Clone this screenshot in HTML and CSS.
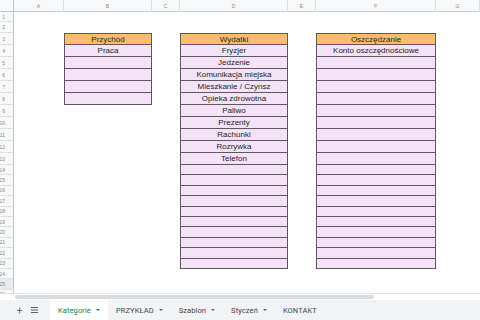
FILE: index.html
```html
<!DOCTYPE html>
<html lang="pl">
<head>
    <meta charset="UTF-8">
    <meta name="viewport" content="width=device-width, initial-scale=1.0">
    <title>Kategorie</title>
    <link rel="stylesheet" href="styles.css">
</head>
<body>

<div class="sheet">
    <!-- naglowki kolumn -->
    <div class="col-head corner"></div>
    <div class="col-head">A</div>
    <div class="col-head">B</div>
    <div class="col-head">C</div>
    <div class="col-head">D</div>
    <div class="col-head">E</div>
    <div class="col-head">F</div>
    <div class="col-head">G</div>

    <!-- numery wierszy -->
    <div class="row-head">1</div>
    <div class="row-head">2</div>
    <div class="row-head">3</div>
    <div class="row-head">4</div>
    <div class="row-head">5</div>
    <div class="row-head">6</div>
    <div class="row-head">7</div>
    <div class="row-head">8</div>
    <div class="row-head">9</div>
    <div class="row-head">10</div>
    <div class="row-head">11</div>
    <div class="row-head">12</div>
    <div class="row-head">13</div>
    <div class="row-head">14</div>
    <div class="row-head">15</div>
    <div class="row-head">16</div>
    <div class="row-head">17</div>
    <div class="row-head">18</div>
    <div class="row-head">19</div>
    <div class="row-head">20</div>
    <div class="row-head">21</div>
    <div class="row-head">22</div>
    <div class="row-head">23</div>
    <div class="row-head">24</div>
    <div class="row-head active">25</div>
    <div class="row-head">26</div>

    <!-- Przychod -->
    <div class="cat cat-income">
        <div class="cell head">Przychód</div>
        <div class="cell">Praca</div>
        <div class="cell"></div>
        <div class="cell"></div>
        <div class="cell"></div>
        <div class="cell"></div>
    </div>

    <!-- Wydatki -->
    <div class="cat cat-expense">
        <div class="cell head">Wydatki</div>
        <div class="cell">Fryzjer</div>
        <div class="cell">Jedzenie</div>
        <div class="cell">Komunikacja miejska</div>
        <div class="cell">Mieszkanie / Czynsz</div>
        <div class="cell">Opieka zdrowotna</div>
        <div class="cell">Paliwo</div>
        <div class="cell">Prezenty</div>
        <div class="cell">Rachunki</div>
        <div class="cell">Rozrywka</div>
        <div class="cell">Telefon</div>
        <div class="cell sm"></div>
        <div class="cell sm"></div>
        <div class="cell sm"></div>
        <div class="cell sm"></div>
        <div class="cell sm"></div>
        <div class="cell sm"></div>
        <div class="cell sm"></div>
        <div class="cell sm"></div>
        <div class="cell sm"></div>
        <div class="cell sm"></div>
    </div>

    <!-- Oszczedzanie -->
    <div class="cat cat-savings">
        <div class="cell head">Oszczędzanie</div>
        <div class="cell">Konto oszczędnościowe</div>
        <div class="cell"></div>
        <div class="cell"></div>
        <div class="cell"></div>
        <div class="cell"></div>
        <div class="cell"></div>
        <div class="cell"></div>
        <div class="cell"></div>
        <div class="cell"></div>
        <div class="cell"></div>
        <div class="cell sm"></div>
        <div class="cell sm"></div>
        <div class="cell sm"></div>
        <div class="cell sm"></div>
        <div class="cell sm"></div>
        <div class="cell sm"></div>
        <div class="cell sm"></div>
        <div class="cell sm"></div>
        <div class="cell sm"></div>
        <div class="cell sm"></div>
    </div>
</div>

<div class="hscroll">
    <div class="hscroll-thumb"></div>
</div>

<div class="tabs">
    <span class="tab-btn">+</span>
    <span class="tab-btn list">
        <svg width="7" height="6" viewBox="0 0 7 6"><path d="M0 0.5h7M0 3h7M0 5.5h7" stroke="#5f6368" stroke-width="1.2"/></svg>
    </span>
    <div class="tab active">Kategorie<span class="caret"></span></div>
    <div class="tab">PRZYKŁAD<span class="caret"></span></div>
    <div class="tab">Szablon<span class="caret"></span></div>
    <div class="tab">Styczeń<span class="caret"></span></div>
    <div class="tab">KONTAKT</div>
</div>

</body>
</html>
```

FILE: styles.css
```css
html, body {
    margin: 0;
    padding: 0;
    width: 480px;
    height: 320px;
    overflow: hidden;
    background: #fff;
    font-family: "Liberation Sans", Arial, sans-serif;
}

.sheet {
    display: grid;
    grid-template-columns: 14px 50px 88px 28px 108px 28px 120px 44px;
    grid-template-rows: 12px 10px 11px repeat(11, 12px) repeat(13, 10.4px);
    height: 294px;
    overflow: hidden;
    border-bottom: 1px solid #e3e3e3;
    box-sizing: border-box;
}

.col-head {
    background: #f8f9fa;
    border-right: 1px solid #e1e1e1;
    border-bottom: 1px solid #c4c7c5;
    box-sizing: border-box;
    font-size: 5px;
    color: #8a8a8a;
    display: flex;
    align-items: center;
    justify-content: center;
}

.col-head.corner {
    border-right: 1px solid #c4c7c5;
}

.row-head {
    grid-column: 1;
    background: #f8f9fa;
    border-right: 1px solid #c4c7c5;
    border-bottom: 1px solid #e1e1e1;
    box-sizing: border-box;
    font-size: 5px;
    color: #8a8a8a;
    display: flex;
    align-items: center;
    justify-content: flex-end;
    padding-right: 8px;
}

.row-head.active {
    background: #e8eaed;
}

.cat {
    display: flex;
    flex-direction: column;
    border-left: 1px solid #5e5662;
    border-right: 1px solid #5e5662;
    box-sizing: border-box;
}

.cat-income {
    grid-column: 3;
    grid-row: 4 / 10;
}

.cat-expense {
    grid-column: 5;
    grid-row: 4 / 25;
}

.cat-savings {
    grid-column: 7;
    grid-row: 4 / 25;
}

.cell {
    height: 12px;
    flex-shrink: 0;
    box-sizing: border-box;
    border-bottom: 1px solid #5e5662;
    background: #f4e2f6;
    font-size: 8px;
    color: #262626;
    display: flex;
    align-items: center;
    justify-content: center;
    white-space: nowrap;
}

.cell.sm {
    height: 10.4px;
}

.cell.head {
    background: #fbbd6a;
    border-top: 1px solid #5e5662;
}

.hscroll {
    height: 6px;
    padding: 1px 0 0 15px;
    box-sizing: border-box;
}

.hscroll-thumb {
    width: 359px;
    height: 4px;
    border-radius: 2px;
    background: #dadce0;
}

.tabs {
    height: 20px;
    background: #f1f3f4;
    display: flex;
    align-items: stretch;
    font-family: Roboto, "Liberation Sans", sans-serif;
    font-size: 7.5px;
    color: #444746;
}

.tab-btn {
    display: flex;
    align-items: center;
    justify-content: center;
    width: 15px;
    color: #5f6368;
    font-size: 10px;
}

.tab-btn:first-child {
    margin-left: 12px;
}

.tab-btn.list {
    margin-right: 8px;
}

.tab {
    display: flex;
    align-items: center;
    padding: 0 8px;
    letter-spacing: 0.1px;
}

.tab.active {
    background: #fff;
    color: #188038;
}

.caret {
    width: 0;
    height: 0;
    margin-left: 5px;
    border-left: 2.5px solid transparent;
    border-right: 2.5px solid transparent;
    border-top: 2.5px solid #5f6368;
}

.tab.active .caret {
    border-top-color: #188038;
}
```
